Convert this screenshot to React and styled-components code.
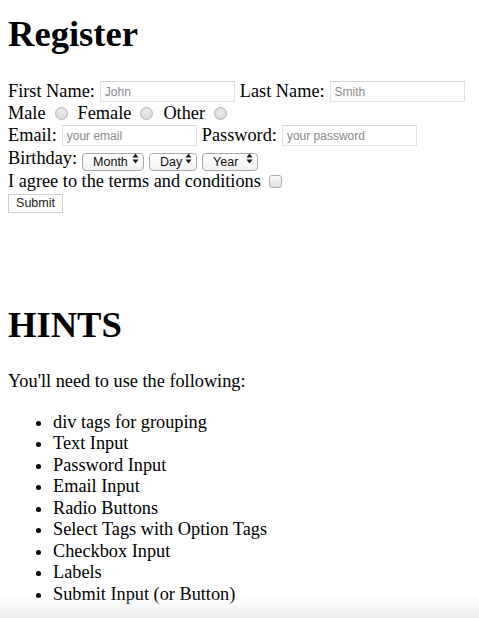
import React from "react"
import styled, { createGlobalStyle } from "styled-components"

const GlobalStyle = createGlobalStyle`
  html, body {
    margin: 0;
    padding: 0;
    background: #ffffff;
  }
  body {
    font-family: "Liberation Serif", "Times New Roman", serif;
    font-size: 18.3px;
    color: #000000;
  }
`

const hints = [
  "div tags for grouping",
  "Text Input",
  "Password Input",
  "Email Input",
  "Radio Buttons",
  "Select Tags with Option Tags",
  "Checkbox Input",
  "Labels",
  "Submit Input (or Button)",
]

const Arrows = () => (
  <ArrowIcon width="7" height="11" viewBox="0 0 7 11">
    <path d="M0.5 4.5 L3.5 0.5 L6.5 4.5 Z" fill="#1a1a1a" />
    <path d="M0.5 6.5 L3.5 10.5 L6.5 6.5 Z" fill="#1a1a1a" />
  </ArrowIcon>
)

const Select = ({ label, width }) => (
  <SelectWrap $width={width}>
    <SelectBox defaultValue="">
      <option value="">{label}</option>
    </SelectBox>
    <Arrows />
  </SelectWrap>
)

const App = () => {
  return (
    <Page>
      <GlobalStyle />
      <Heading>Register</Heading>
      <Form onSubmit={(e) => e.preventDefault()}>
        <Row>
          <Label htmlFor="first">First Name:</Label>
          <TextInput id="first" type="text" placeholder="John" />
          <Label htmlFor="last">Last Name:</Label>
          <TextInput id="last" type="text" placeholder="Smith" />
        </Row>
        <Row>
          <Label>Male</Label>
          <Radio type="radio" name="gender" value="male" />
          <Label>Female</Label>
          <Radio type="radio" name="gender" value="female" />
          <Label>Other</Label>
          <Radio type="radio" name="gender" value="other" />
        </Row>
        <Row>
          <Label htmlFor="email">Email:</Label>
          <TextInput id="email" type="email" placeholder="your email" />
          <Label htmlFor="pw">Password:</Label>
          <TextInput id="pw" type="password" placeholder="your password" />
        </Row>
        <Row $height={24}>
          <Label>Birthday:</Label>
          <Select label="Month" width={62} />
          <Select label="Day" width={48} />
          <Select label="Year" width={56} />
        </Row>
        <Row>
          <Label htmlFor="agree">I agree to the terms and conditions</Label>
          <Checkbox id="agree" type="checkbox" />
        </Row>
        <Row>
          <SubmitButton type="submit">Submit</SubmitButton>
        </Row>
      </Form>

      <HintsHeading>HINTS</HintsHeading>
      <Intro>You'll need to use the following:</Intro>
      <HintList>
        {hints.map((h) => (
          <li key={h}>{h}</li>
        ))}
      </HintList>
      <BottomShade />
    </Page>
  )
}

const Page = styled.div`
  padding: 0 8px;
  min-height: 618px;
  box-sizing: border-box;
  overflow: hidden;
`

const Heading = styled.h1`
  font-size: 36.6px;
  line-height: 42px;
  font-weight: bold;
  margin: 13px 0 0;
`

const HintsHeading = styled(Heading)`
  margin-top: 90px;
`

const Form = styled.form`
  margin-top: 25px;
  display: flex;
  flex-direction: column;
`

const Row = styled.div`
  display: flex;
  align-items: center;
  height: ${(p) => p.$height || 22}px;
  line-height: 22px;
  white-space: nowrap;
`

const Label = styled.label`
  font-size: 18.3px;
`

const TextInput = styled.input`
  box-sizing: border-box;
  width: 135px;
  height: 21px;
  margin: 0 5px;
  padding: 1px 4px 0;
  border: 1px solid #e2e2e2;
  border-top-color: #d4d4d4;
  border-radius: 0;
  background: #fff;
  font-family: "Liberation Sans", Arial, sans-serif;
  font-size: 12px;
  color: #333;
  outline: none;
  &::placeholder {
    color: #8a8a8a;
  }
`

const Radio = styled.input`
  appearance: none;
  box-sizing: border-box;
  width: 13px;
  height: 13px;
  margin: 0 10px 0 9px;
  border-radius: 50%;
  border: 1px solid #b4b4b4;
  background: radial-gradient(circle at 50% 40%, #ececec 0%, #d6d6d6 100%);
`

const Checkbox = styled.input`
  appearance: none;
  box-sizing: border-box;
  width: 13px;
  height: 13px;
  margin: 0 0 0 8px;
  border-radius: 3px;
  border: 1px solid #adadad;
  background: linear-gradient(#fbfbfb, #dedede);
`

const SelectWrap = styled.div`
  position: relative;
  width: ${(p) => p.$width}px;
  height: 18px;
  margin-left: 5px;
`

const SelectBox = styled.select`
  appearance: none;
  box-sizing: border-box;
  width: 100%;
  height: 18px;
  margin: 0;
  padding: 0 2px 0 10px;
  border: 1px solid #a9a9a9;
  border-radius: 4px;
  background: linear-gradient(#ffffff, #f1f1f1);
  font-family: "Liberation Sans", Arial, sans-serif;
  font-size: 12.5px;
  color: #111;
  line-height: 16px;
  outline: none;
`

const ArrowIcon = styled.svg`
  position: absolute;
  right: 5px;
  top: 3.5px;
  pointer-events: none;
`

const SubmitButton = styled.button`
  box-sizing: border-box;
  width: 55px;
  height: 19px;
  margin-top: 0;
  padding: 0;
  border: 1px solid #cfcfcf;
  border-radius: 0;
  background: #fff;
  font-family: "Liberation Sans", Arial, sans-serif;
  font-size: 12.5px;
  color: #222;
`

const Intro = styled.p`
  margin: 25px 0 0;
  line-height: 21.5px;
`

const HintList = styled.ul`
  margin: 19px 0 0;
  padding-left: 45px;
  line-height: 21.55px;
`

const BottomShade = styled.div`
  position: fixed;
  left: 0;
  right: 0;
  bottom: 0;
  height: 22px;
  background: linear-gradient(rgba(235, 235, 235, 0), rgba(235, 235, 235, 0.9));
  pointer-events: none;
`

export default App
